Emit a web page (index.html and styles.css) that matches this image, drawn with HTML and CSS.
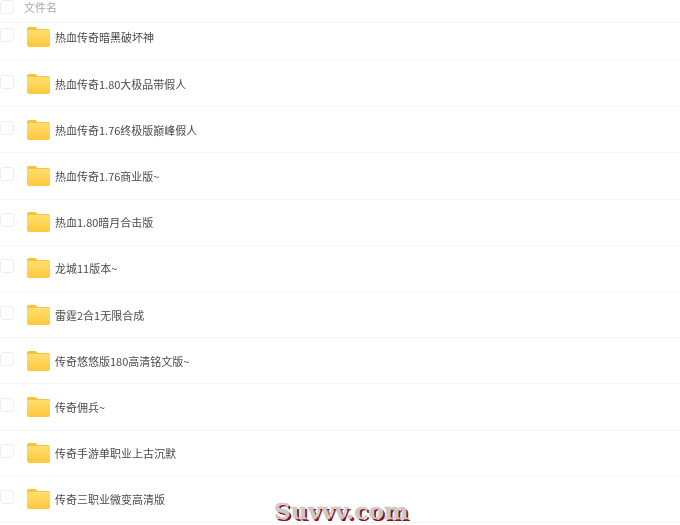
FILE: index.html
```html
<!DOCTYPE html>
<html lang="zh-CN">
  <head>
    <meta charset="UTF-8" />
    <title>文件名</title>
    <link rel="stylesheet" href="styles.css">
  </head>
  <body>
    <svg class="defs" width="0" height="0">
      <defs>
        <linearGradient id="folderFront" x1="0" y1="0" x2="0" y2="1">
          <stop offset="0" stop-color="#ffdf6e" />
          <stop offset="1" stop-color="#fdc83c" />
        </linearGradient>
        <symbol id="folder" viewBox="0 0 23 20">
          <path d="M0 2C0 .8 .8 0 2 0H8.5L10.5 2H21C22.2 2 23 2.8 23 4V10H0Z" fill="#f7c338" />
          <path d="M0 5C0 3.8 .8 3 2 3H21C22.2 3 23 3.8 23 5V18C23 19.2 22.2 20 21 20H2C.8 20 0 19.2 0 18Z" fill="url(#folderFront)" />
        </symbol>
      </defs>
    </svg>

    <div class="list">
      <div class="head">
        <span class="check"></span>
        <span class="head-name">文件名</span>
      </div>

      <div class="row first">
        <span class="check"></span>
        <svg class="folder"><use href="#folder" /></svg>
        <span class="name">热血传奇暗黑破坏神</span>
      </div>
      <div class="row">
        <span class="check"></span>
        <svg class="folder"><use href="#folder" /></svg>
        <span class="name">热血传奇1.80大极品带假人</span>
      </div>
      <div class="row">
        <span class="check"></span>
        <svg class="folder"><use href="#folder" /></svg>
        <span class="name">热血传奇1.76终极版巅峰假人</span>
      </div>
      <div class="row">
        <span class="check"></span>
        <svg class="folder"><use href="#folder" /></svg>
        <span class="name">热血传奇1.76商业版~</span>
      </div>
      <div class="row">
        <span class="check"></span>
        <svg class="folder"><use href="#folder" /></svg>
        <span class="name">热血1.80暗月合击版</span>
      </div>
      <div class="row">
        <span class="check"></span>
        <svg class="folder"><use href="#folder" /></svg>
        <span class="name">龙城11版本~</span>
      </div>
      <div class="row">
        <span class="check"></span>
        <svg class="folder"><use href="#folder" /></svg>
        <span class="name">雷霆2合1无限合成</span>
      </div>
      <div class="row">
        <span class="check"></span>
        <svg class="folder"><use href="#folder" /></svg>
        <span class="name">传奇悠悠版180高清铭文版~</span>
      </div>
      <div class="row">
        <span class="check"></span>
        <svg class="folder"><use href="#folder" /></svg>
        <span class="name">传奇佣兵~</span>
      </div>
      <div class="row">
        <span class="check"></span>
        <svg class="folder"><use href="#folder" /></svg>
        <span class="name">传奇手游单职业上古沉默</span>
      </div>
      <div class="row">
        <span class="check"></span>
        <svg class="folder"><use href="#folder" /></svg>
        <span class="name">传奇三职业微变高清版</span>
      </div>
    </div>

    <div class="watermark">Suvvv.com</div>
  </body>
</html>
```

FILE: styles.css
```css
html,
body {
  height: 100%;
}

body {
  margin: 0;
  overflow: hidden;
  background-color: #fff;
  font-family: "Noto Sans CJK SC", "Liberation Sans", sans-serif;
  color: #444;
}

.defs {
  position: absolute;
}

.list {
  filter: blur(0.35px);
}

.head {
  display: flex;
  align-items: center;
  height: 14px;
  padding-bottom: 8px;
  border-bottom: 1px solid #f6f6f6;
}

.head-name {
  margin-left: 10px;
  font-size: 11px;
  line-height: 14px;
  color: #a8a8a8;
}

.row {
  display: flex;
  align-items: center;
  height: 45.2px;
  border-bottom: 1px solid #f6f6f6;
}

.row.first {
  height: 27px;
  padding-bottom: 10px;
}

.check {
  flex: none;
  width: 12px;
  height: 12px;
  margin-top: -4px;
  border: 1px solid #ededed;
  border-radius: 3px;
}

.row.first .check {
  margin-top: -3px;
}

.head .check {
  margin-top: 0;
}

.folder {
  flex: none;
  width: 23px;
  height: 20px;
  margin-left: 13px;
}

.name {
  margin-left: 5px;
  font-size: 11px;
  line-height: 16px;
  color: #4a4a4a;
}

.watermark {
  position: absolute;
  left: 274px;
  top: 498px;
  font-family: "DejaVu Serif", serif;
  font-size: 23px;
  font-weight: bold;
  line-height: 26px;
  letter-spacing: 0.2px;
  color: #c9c9c9;
  -webkit-text-stroke: 0.4px #c9c9c9;
  text-shadow: 2px 2px 0 #8e0f14;
}
```
